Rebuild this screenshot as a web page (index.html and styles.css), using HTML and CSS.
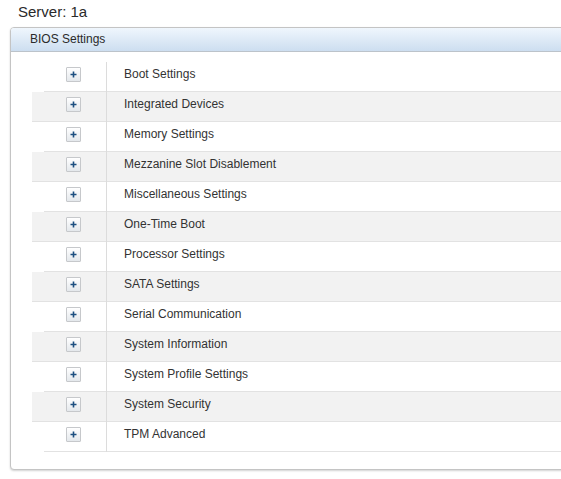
FILE: index.html
```html
<!DOCTYPE html>
<html>
<head>
<meta charset="utf-8">
<link rel="stylesheet" href="styles.css">
</head>
<body>
<div class="title">Server: 1a</div>
<div class="panel">
  <div class="panel-head">BIOS Settings</div>
  <div class="panel-body">
    <div class="list">
      <div class="row"><div class="icon-cell"><span class="plus"><svg width="7" height="7" viewBox="0 0 7 7"><path d="M3.5 0.5v6M0.5 3.5h6" stroke="#1d4f80" stroke-width="1.6"/></svg></span></div><div class="label">Boot Settings</div></div>
      <div class="row alt"><div class="icon-cell"><span class="plus"><svg width="7" height="7" viewBox="0 0 7 7"><path d="M3.5 0.5v6M0.5 3.5h6" stroke="#1d4f80" stroke-width="1.6"/></svg></span></div><div class="label">Integrated Devices</div></div>
      <div class="row"><div class="icon-cell"><span class="plus"><svg width="7" height="7" viewBox="0 0 7 7"><path d="M3.5 0.5v6M0.5 3.5h6" stroke="#1d4f80" stroke-width="1.6"/></svg></span></div><div class="label">Memory Settings</div></div>
      <div class="row alt"><div class="icon-cell"><span class="plus"><svg width="7" height="7" viewBox="0 0 7 7"><path d="M3.5 0.5v6M0.5 3.5h6" stroke="#1d4f80" stroke-width="1.6"/></svg></span></div><div class="label">Mezzanine Slot Disablement</div></div>
      <div class="row"><div class="icon-cell"><span class="plus"><svg width="7" height="7" viewBox="0 0 7 7"><path d="M3.5 0.5v6M0.5 3.5h6" stroke="#1d4f80" stroke-width="1.6"/></svg></span></div><div class="label">Miscellaneous Settings</div></div>
      <div class="row alt"><div class="icon-cell"><span class="plus"><svg width="7" height="7" viewBox="0 0 7 7"><path d="M3.5 0.5v6M0.5 3.5h6" stroke="#1d4f80" stroke-width="1.6"/></svg></span></div><div class="label">One-Time Boot</div></div>
      <div class="row"><div class="icon-cell"><span class="plus"><svg width="7" height="7" viewBox="0 0 7 7"><path d="M3.5 0.5v6M0.5 3.5h6" stroke="#1d4f80" stroke-width="1.6"/></svg></span></div><div class="label">Processor Settings</div></div>
      <div class="row alt"><div class="icon-cell"><span class="plus"><svg width="7" height="7" viewBox="0 0 7 7"><path d="M3.5 0.5v6M0.5 3.5h6" stroke="#1d4f80" stroke-width="1.6"/></svg></span></div><div class="label">SATA Settings</div></div>
      <div class="row"><div class="icon-cell"><span class="plus"><svg width="7" height="7" viewBox="0 0 7 7"><path d="M3.5 0.5v6M0.5 3.5h6" stroke="#1d4f80" stroke-width="1.6"/></svg></span></div><div class="label">Serial Communication</div></div>
      <div class="row alt"><div class="icon-cell"><span class="plus"><svg width="7" height="7" viewBox="0 0 7 7"><path d="M3.5 0.5v6M0.5 3.5h6" stroke="#1d4f80" stroke-width="1.6"/></svg></span></div><div class="label">System Information</div></div>
      <div class="row"><div class="icon-cell"><span class="plus"><svg width="7" height="7" viewBox="0 0 7 7"><path d="M3.5 0.5v6M0.5 3.5h6" stroke="#1d4f80" stroke-width="1.6"/></svg></span></div><div class="label">System Profile Settings</div></div>
      <div class="row alt"><div class="icon-cell"><span class="plus"><svg width="7" height="7" viewBox="0 0 7 7"><path d="M3.5 0.5v6M0.5 3.5h6" stroke="#1d4f80" stroke-width="1.6"/></svg></span></div><div class="label">System Security</div></div>
      <div class="row"><div class="icon-cell"><span class="plus"><svg width="7" height="7" viewBox="0 0 7 7"><path d="M3.5 0.5v6M0.5 3.5h6" stroke="#1d4f80" stroke-width="1.6"/></svg></span></div><div class="label">TPM Advanced</div></div>
    </div>
  </div>
</div>
</body>
</html>
```
FILE: styles.css
```css
html, body {
  margin: 0;
  padding: 0;
  background: #ffffff;
  overflow: hidden;
  width: 561px;
  height: 479px;
}
body {
  font-family: "Liberation Sans", Arial, sans-serif;
  color: #333333;
}
.title {
  font-size: 15px;
  line-height: 18px;
  padding: 3px 0 0 18px;
  height: 24px;
  color: #2a2a2a;
}
.panel {
  margin-left: 10px;
  width: 620px;
  border: 1px solid #c4c4c4;
  border-radius: 4px;
  box-shadow: 0 1px 2px rgba(0, 0, 0, 0.18);
  background: #ffffff;
}
.panel-head {
  height: 23px;
  line-height: 23px;
  font-size: 12px;
  padding-left: 19px;
  color: #2b2b2b;
  background: linear-gradient(#eff6fd, #cddef0);
  border-bottom: 1px solid #bcc3ca;
  border-radius: 3px 3px 0 0;
}
.panel-body {
  padding: 10px 0 17px 21px;
}
.list {
  display: flex;
  flex-direction: column;
}
.row {
  display: flex;
  height: 30px;
  background: linear-gradient(#e2e2e2, #e2e2e2) 12px 100% / 100% 1px no-repeat;
}
.row.alt {
  background: linear-gradient(#e2e2e2, #e2e2e2) 0 100% / 100% 1px no-repeat, #f2f2f2;
}
.icon-cell {
  width: 75px;
  border-right: 1px solid #dcdcdc;
  display: flex;
  align-items: flex-start;
  padding: 5px 0 0 34px;
  box-sizing: border-box;
}
.plus {
  width: 15px;
  height: 15px;
  box-sizing: border-box;
  border: 1px solid #c6c8cb;
  border-radius: 1px;
  background: linear-gradient(#ffffff, #e4e8ec);
  display: flex;
  align-items: center;
  justify-content: center;
}
.plus svg {
  display: block;
}
.label {
  font-size: 12px;
  line-height: 14px;
  padding: 5px 0 0 17px;
  color: #333333;
}
```
